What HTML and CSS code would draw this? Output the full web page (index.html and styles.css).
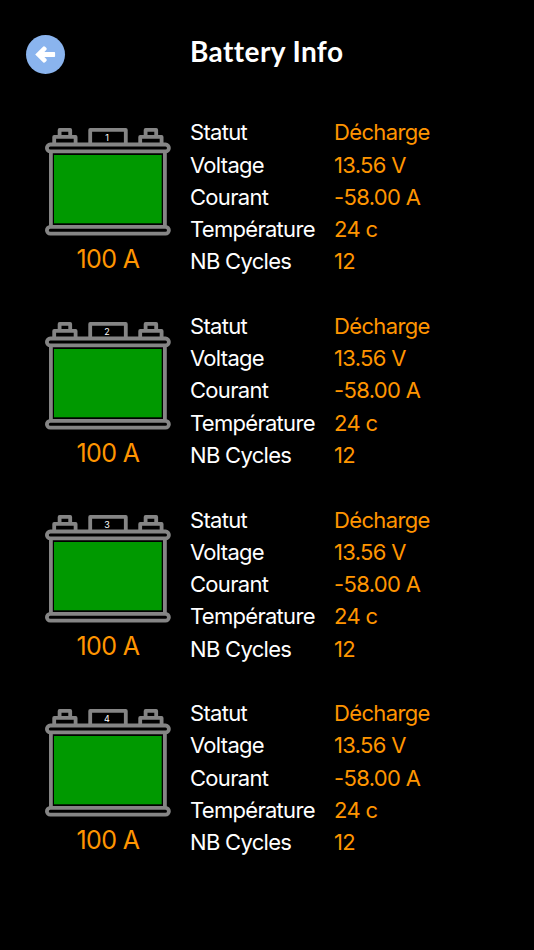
FILE: index.html
```
<!DOCTYPE html>
<html lang="fr">
<head>
    <meta charset="UTF-8">
    <meta name="viewport" content="width=device-width, initial-scale=1.0">
    <title>Battery Info</title>
    <link rel="stylesheet" href="styles.css">
</head>
<body>
    <header class="header">
        <button class="back-button" id="backButton" aria-label="Retour">
            <svg width="39" height="39" viewBox="0 0 39 39">
                <path d="M9.2 19.5 L17.3 11.5 Q18.2 10.8 19.1 11.7 L20.4 13 Q21.2 13.9 20.4 14.8 L18.4 16.9 H28.3 Q29.1 16.9 29.1 17.7 V21.2 Q29.1 22 28.3 22 H18.4 L20.4 24.1 Q21.2 25 20.4 25.9 L19.1 27.3 Q18.2 28.2 17.3 27.4 Z"/>
            </svg>
        </button>
        <h1>Battery Info</h1>
    </header>

    <main class="battery-list" id="batteryList"></main>

    <script src="script.js"></script>
</body>
</html>
```
FILE: styles.css
```
body {
    margin: 0;
    min-height: 950px;
    background-color: #000;
    color: #fff;
    font-family: Inter, "Liberation Sans", sans-serif;
}
.header {
    display: grid;
    grid-template-columns: 164px 1fr;
    align-items: center;
    height: 39px;
    padding: 35px 0 0 26px;
}
.back-button {
    width: 39px;
    height: 39px;
    padding: 0;
    border: none;
    border-radius: 50%;
    background-color: #8ab4ee;
    cursor: pointer;
}
.back-button svg {
    display: block;
    fill: #fff;
}
h1 {
    margin: 0 0 7px;
    font-family: Lato, sans-serif;
    font-size: 28px;
    line-height: 32px;
    font-weight: bold;
    letter-spacing: 0.4px;
}
.battery-list {
    display: grid;
    gap: 32.4px;
    padding: 42.3px 0 0 45px;
}
.battery {
    display: grid;
    grid-template-columns: 126px 1fr;
    column-gap: 19px;
}
.battery-figure {
    padding-top: 10.6px;
    text-align: center;
}
.battery-icon {
    display: block;
    fill: none;
    stroke: #858585;
    stroke-width: 3.8;
    stroke-linejoin: round;
}
.battery-icon .level {
    fill: #009900;
    stroke: none;
}
.battery-icon .number {
    fill: #fff;
    stroke: none;
    font-size: 9px;
    text-anchor: middle;
}
.capacity {
    color: #ff9500;
    font-size: 25px;
    letter-spacing: -0.6px;
    line-height: 30px;
    margin-top: 7px;
}
.details {
    display: grid;
    grid-template-columns: 144px 1fr;
    grid-auto-rows: 32.25px;
    margin: 0;
    font-size: 22px;
    letter-spacing: -0.7px;
    line-height: 32px;
    white-space: nowrap;
}
.details dd {
    margin: 0;
    color: #ff9500;
    letter-spacing: -0.65px;
}
```
FILE: script.js
```
const batteryList = document.getElementById('batteryList');

const batteries = [1, 2, 3, 4].map(id => ({
    id: id,
    capacity: '100 A',
    details: {
        'Statut': 'Décharge',
        'Voltage': '13.56 V',
        'Courant': '-58.00 A',
        'Température': '24 c',
        'NB Cycles': '12'
    }
}));

// Add one battery to the list
function addBattery(battery) {
    const rows = Object.entries(battery.details)
        .map(([label, value]) => `<dt>${label}</dt><dd>${value}</dd>`)
        .join('');

    const section = document.createElement('section');
    section.className = 'battery';
    section.innerHTML = `
        <div class="battery-figure">
            <svg class="battery-icon" width="126" height="110" viewBox="0 0 126 110">
                <path d="M9.2 17V9.9H30.6V17 M14.6 9.9V2.9H25.2V9.9"/>
                <path d="M95.2 17V9.9H116.6V17 M100.6 9.9V2.9H111.2V9.9"/>
                <path d="M45.2 17V2.9H80.8V17"/>
                <rect x="1.9" y="17.5" width="122" height="6.8" rx="3.4"/>
                <path d="M5.9 25V99 M119.9 25V99"/>
                <rect x="1.9" y="99.8" width="122" height="6.8" rx="3.4"/>
                <rect class="level" x="9" y="28" width="107.7" height="68.3"/>
                <text class="number" x="62" y="14">${battery.id}</text>
            </svg>
            <div class="capacity">${battery.capacity}</div>
        </div>
        <dl class="details">${rows}</dl>`;
    batteryList.appendChild(section);
}

batteries.forEach(addBattery);
```
